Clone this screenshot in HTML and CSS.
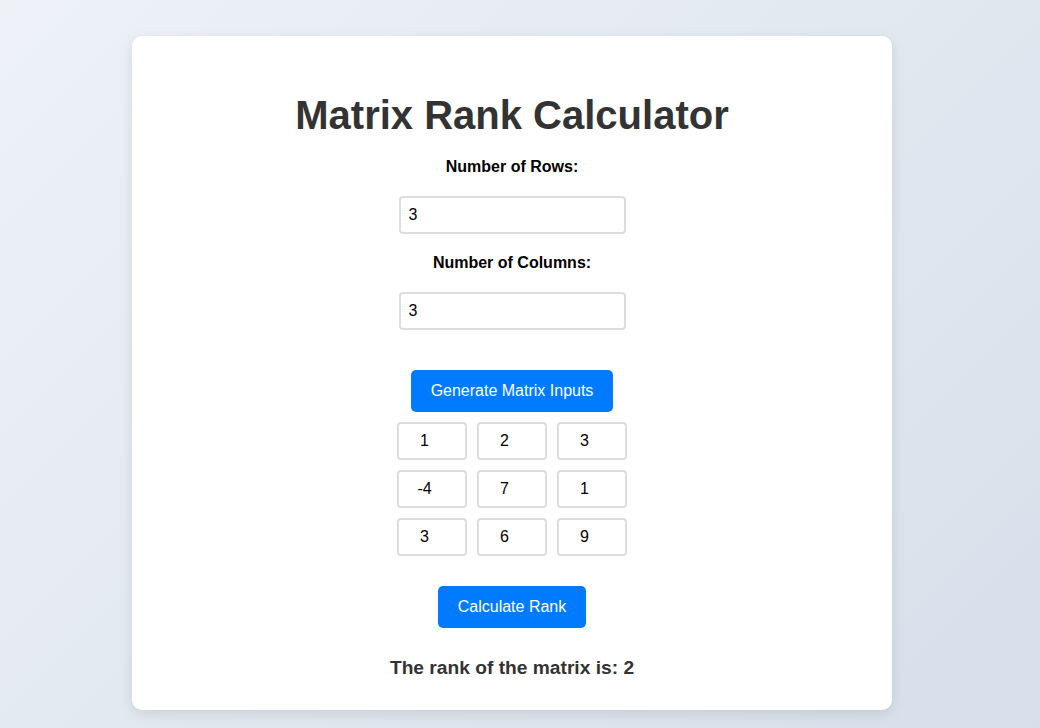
FILE: index.html
```html
<!DOCTYPE html>
<html lang="en">
<head>
<meta charset="utf-8">
<title>Matrix Rank Calculator</title>
<link rel="stylesheet" href="styles.css">
</head>
<body>
<main class="card">
  <h1 class="title">Matrix Rank Calculator</h1>
  <label class="field-label" for="rows">Number of Rows:</label>
  <input class="size-input" id="rows" type="number" value="3">
  <label class="field-label" for="cols">Number of Columns:</label>
  <input class="size-input" id="cols" type="number" value="3">
  <button class="btn btn-generate" type="button">Generate Matrix Inputs</button>
  <div class="matrix">
    <input class="cell" type="number" value="1">
    <input class="cell" type="number" value="2">
    <input class="cell" type="number" value="3">
    <input class="cell" type="number" value="-4">
    <input class="cell" type="number" value="7">
    <input class="cell" type="number" value="1">
    <input class="cell" type="number" value="3">
    <input class="cell" type="number" value="6">
    <input class="cell" type="number" value="9">
  </div>
  <button class="btn btn-calc" type="button">Calculate Rank</button>
  <p class="result">The rank of the matrix is: 2</p>
</main>
</body>
</html>
```

FILE: styles.css
```css
html, body {
  height: 100%;
}
body {
  margin: 0;
  padding: 36px 16px 0 0;
  box-sizing: border-box;
  font-family: "Liberation Sans", Arial, sans-serif;
  background: linear-gradient(135deg, #eef2f7 0%, #d6dfea 100%);
  overflow: hidden;
}
.card {
  width: 760px;
  box-sizing: border-box;
  margin: 0 auto;
  padding: 30px 30px 31px;
  background: #fff;
  border-radius: 10px;
  box-shadow: 0 4px 14px rgba(0, 0, 0, 0.1);
  display: flex;
  flex-direction: column;
  align-items: center;
}
.title {
  font-size: 40px;
  font-weight: bold;
  color: #333;
  margin: 26px 0 20px;
  line-height: 46px;
}
.field-label {
  display: block;
  font-weight: bold;
  font-size: 16px;
  line-height: 18px;
  color: #000;
  margin-bottom: 20px;
}
.size-input {
  width: 227px;
  height: 38px;
  box-sizing: border-box;
  padding: 8px;
  border: 2px solid #ddd;
  border-radius: 4px;
  font-family: "Liberation Sans", Arial, sans-serif;
  font-size: 16px;
  color: #000;
  margin-bottom: 20px;
}
.size-input:last-of-type {
  margin-bottom: 0;
}
.btn {
  background: #007bff;
  color: #fff;
  border: none;
  border-radius: 5px;
  font-family: "Liberation Sans", Arial, sans-serif;
  font-size: 16px;
  height: 42px;
  padding: 0 20px;
  cursor: pointer;
}
.btn-generate {
  margin-top: 40px;
}
.matrix {
  display: grid;
  grid-template-columns: repeat(3, 70px);
  gap: 10px;
  margin-top: 10px;
}
.cell {
  width: 70px;
  height: 38px;
  box-sizing: border-box;
  padding: 8px;
  border: 2px solid #ddd;
  border-radius: 4px;
  font-family: "Liberation Sans", Arial, sans-serif;
  font-size: 16px;
  color: #000;
  text-align: center;
}
.btn-calc {
  margin-top: 30px;
}
.result {
  font-size: 19.2px;
  font-weight: bold;
  color: #333;
  margin: 29px 0 0;
  line-height: 22px;
}
```
